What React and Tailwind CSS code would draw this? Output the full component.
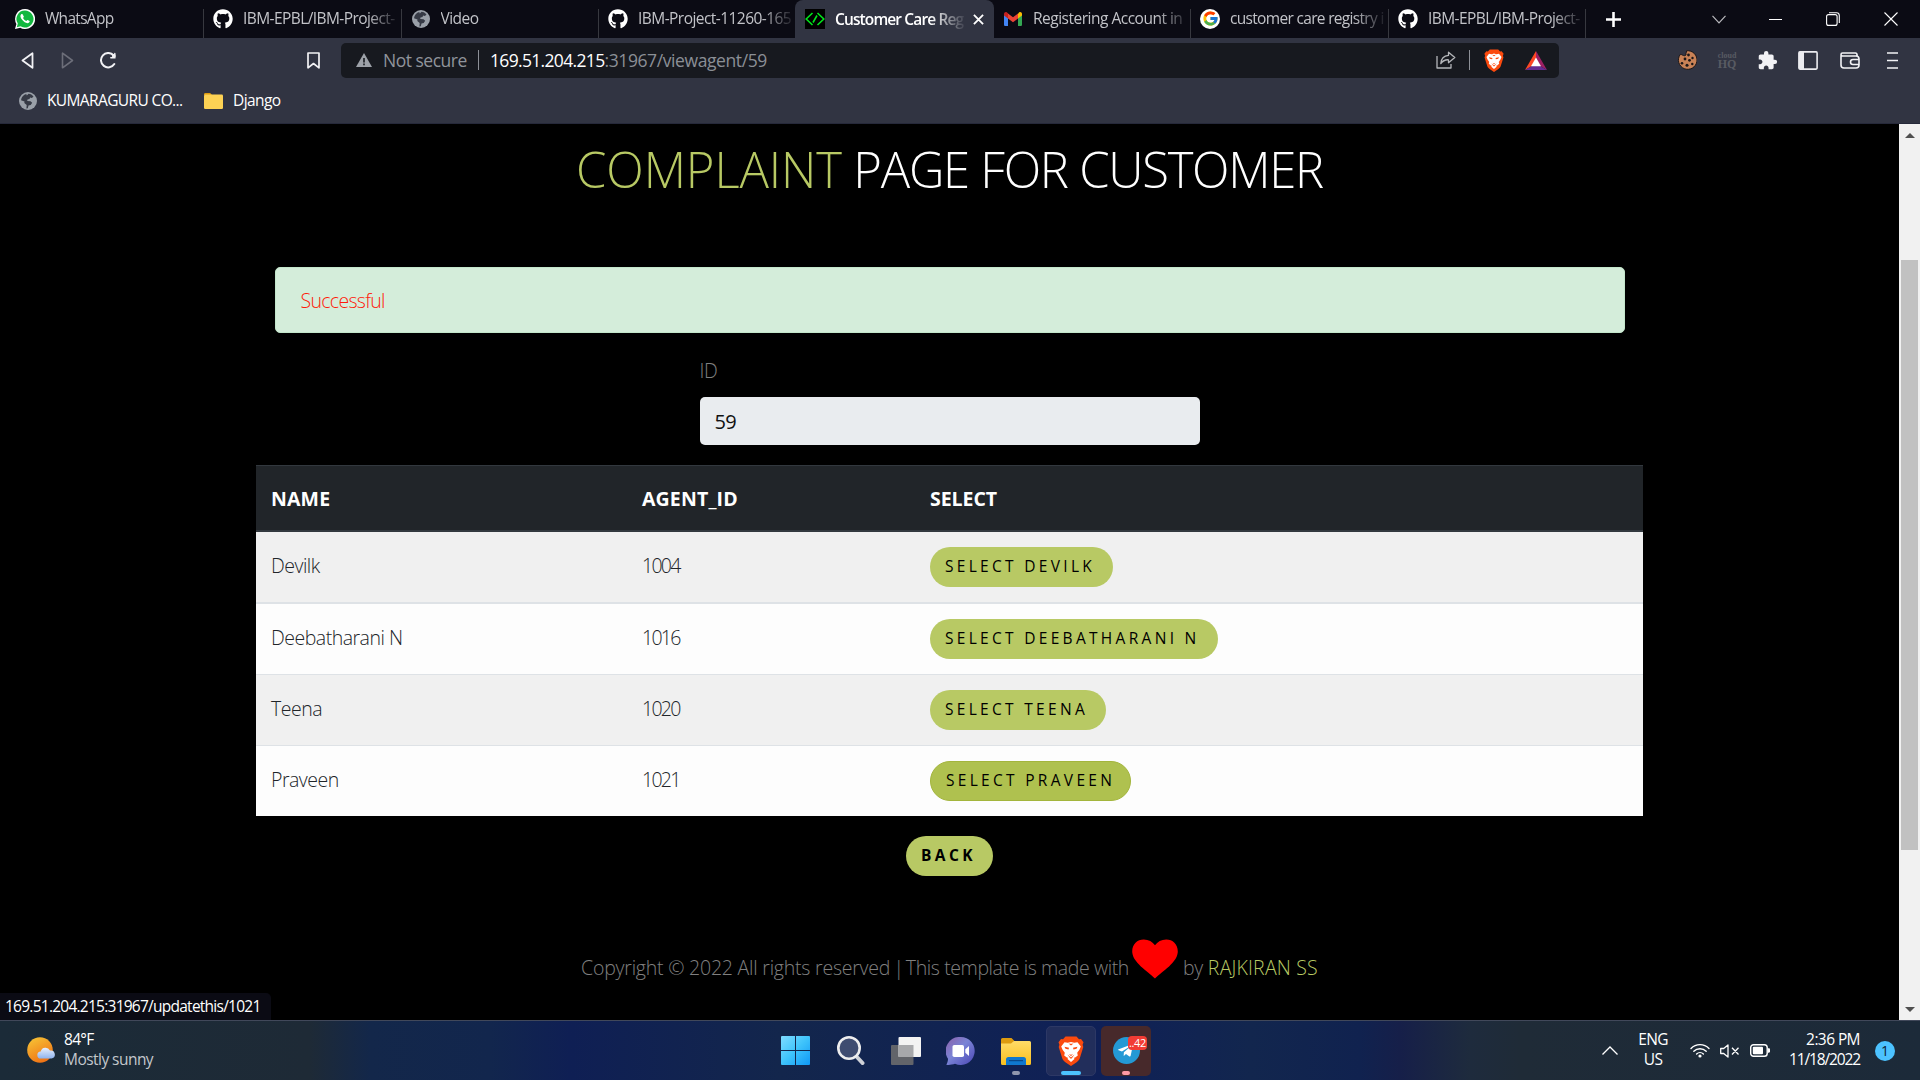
import { FaGithub, FaTelegramPlane } from "react-icons/fa";
import { FcGoogle } from "react-icons/fc";
import { MdExtension } from "react-icons/md";

function WhatsAppIcon() {
  return (
    <svg viewBox="0 0 20 20" className="size-5">
      <path d="M10 0a10 10 0 0 0-8.6 15L0 20l5.200-1.300A10 10 0 1 0 10 0z" fill="#fff" />
      <path d="M10 1.500a8.500 8.500 0 0 0-7.200 13.100l-1 3.600 3.700-1A8.500 8.500 0 1 0 10 1.500z" fill="#12b83f" />
      <path
        d="M7.600 5.300c-.3-.5-.8-.5-1.200-.2-1.700 1.300-1 3.700.7 5.700 2 2.400 4.800 4.200 6.700 3 .8-.5 1-1.200.8-1.700l-2-1.100c-.5-.2-.8.8-1.300 1-1.200-.3-3-2-3.200-3 .2-.5.900-.8.700-1.400z"
        fill="#fff"
      />
    </svg>
  );
}

function GlobeIcon() {
  return (
    <svg viewBox="0 0 18 18" className="size-[18px]">
      <circle cx="9" cy="9" r="9" fill="#9aa0a8" />
      <path
        d="M9.500 1.800c2 .1 3.900 1.200 5 2.900l-1.800 1.200-1.600-.3-.6 1.300-2 .6-.3 1.600 3.300.2 1.700 1.500-1.500 2.200-2.200.6-.7 2.600-1.400.2.300-3.300-2.400-2.100.2-1.500L2 8.200C2.300 5 4.500 2.500 7.300 1.900l.5 1.700z"
        fill="#363a45"
      />
    </svg>
  );
}

function CodeIcon() {
  return (
    <svg viewBox="0 0 20 20" className="size-5 bg-black" fill="none" stroke="#00e51b" strokeWidth="1.600">
      <path d="M7.500 4L1.200 10l6.300 6M12.500 4l6.300 6-6.300 6M12 6.500l-4 7" />
    </svg>
  );
}

function GmailIcon() {
  return (
    <svg viewBox="0 0 18 14" className="h-[14px] w-[18px]">
      <path d="M0 2v10.700C0 13.400.6 14 1.300 14H4V5.500z" fill="#4285f4" />
      <path d="M18 2v10.700c0 .7-.6 1.300-1.300 1.300H14V5.500z" fill="#34a853" />
      <path d="M14 1.800V6.500l4-3V2c0-1.700-1.800-2.500-3-1.500z" fill="#fbbc04" />
      <path d="M4 6.500V1.500l5 3.800 5-3.800v5l-5 3.800z" fill="#ea4335" />
      <path d="M0 2v1.500l4 3V1.300L3 .5C1.800-.5 0 .3 0 2z" fill="#c5221f" />
    </svg>
  );
}

function GoogleIcon() {
  return (
    <span className="flex size-5 items-center justify-center rounded-full bg-white">
      <FcGoogle className="size-[17px]" />
    </span>
  );
}

const GithubIcon = () => <FaGithub className="size-5 text-white" />;

const tabs = [
  { title: "WhatsApp", Icon: WhatsAppIcon, tab: "w-[204px] pl-[15px] border-r", text: "tracking-[-0.7px]" },
  { title: "IBM-EPBL/IBM-Project-", Icon: GithubIcon, tab: "w-[197.5px] pl-[9px] border-r", text: "tracking-[-0.58px]" },
  { title: "Video", Icon: GlobeIcon, tab: "w-[197.5px] pl-[9px] border-r", text: "tracking-[-0.55px]" },
  { title: "IBM-Project-11260-165", Icon: GithubIcon, tab: "w-[196px] pl-[9px]", text: "tracking-[-0.55px]" },
  { title: "Customer Care Reg", Icon: CodeIcon, active: true, tab: "w-[199px] pl-[10px]", text: "tracking-[-0.88px]" },
  { title: "Registering Account in", Icon: GmailIcon, tab: "w-[197px] pl-[9px] border-r", text: "tracking-[-0.5px]" },
  { title: "customer care registry i", Icon: GoogleIcon, tab: "w-[198px] pl-[9px] border-r", text: "tracking-[-0.68px]" },
  { title: "IBM-EPBL/IBM-Project-", Icon: GithubIcon, tab: "w-[196.5px] pl-[9px] border-r", text: "tracking-[-0.58px]" },
];

function TabStrip() {
  return (
    <div className="flex h-[38px] items-end bg-[#0b0b14]">
      {tabs.map(({ title, Icon, tab, text, active }, i) => (
        <div
          key={i}
          className={
            "flex shrink-0 items-center " +
            tab +
            (active ? " h-[38px] rounded-t-lg bg-[#313442]" : " h-[29px] border-[#37383f] pb-[10px]")
          }
        >
          <span className="flex w-5 shrink-0 justify-center">
            <Icon />
          </span>
          <span
            className={
              "ml-[10px] shrink-0 overflow-hidden pb-px text-[15.5px] leading-5 whitespace-nowrap " +
              text +
              (active
                ? " w-[132px] font-semibold text-white [mask-image:linear-gradient(to_right,black_95px,transparent_132px)]"
                : " w-[156px] text-[#c2c3c8] [mask-image:linear-gradient(to_right,black_124px,transparent_158px)]")
            }
          >
            {title}
          </span>
          {active && (
            <svg viewBox="0 0 12 12" className="ml-[6px] size-[11px] shrink-0" stroke="#fff" strokeWidth="2" fill="none">
              <path d="M1 1l10 10M11 1L1 11" />
            </svg>
          )}
        </div>
      ))}
      <div className="flex h-[38px] flex-1 items-center pl-5">
        <svg viewBox="0 0 14 14" className="size-[15px]" stroke="#fff" strokeWidth="2.400">
          <path d="M7 0v14M0 7h14" />
        </svg>
        <svg viewBox="0 0 14 9" className="ml-[91px] h-[9px] w-[14px]" stroke="#b9b9be" strokeWidth="1.200" fill="none">
          <path d="M.5.800L7 7.800 13.500.800" />
        </svg>
        <span className="ml-[43px] h-px w-[13px] bg-white" />
        <svg viewBox="0 0 14 14" className="ml-[44px] size-[14px]" stroke="#fff" strokeWidth="1.100" fill="none">
          <rect x=".6" y="2.600" width="10.500" height="10.800" rx="2" />
          <path d="M3 .7h7.500a2.800 2.800 0 0 1 2.800 2.800V11" />
        </svg>
        <svg viewBox="0 0 14 14" className="ml-[44px] size-[14px]" stroke="#fff" strokeWidth="1.100">
          <path d="M.5.500l13 13M13.500.500l-13 13" />
        </svg>
      </div>
    </div>
  );
}

function BraveLion({ className }) {
  return (
    <svg viewBox="0 0 26 30" className={className}>
      <path
        d="M7.500.500h11l2.500 2.800 2-.3 2.500 3.300-.9 2.400.7 2.400-3.500 11.200c-.6 1.900-1.800 3-3.500 4.200L13 30l-5.300-3.500c-1.700-1.200-2.900-2.300-3.500-4.200L.7 11.100l.7-2.400L.5 6.300 3 3l2 .3z"
        fill="#fb4a0e"
      />
      <path
        d="M6.500 6.200l3.300.6L13 6l3.200.8 3.300-.6 3.300 4.300-1.400 3.300-2.200 3 .6 2.600-3 2.300-1-.3.700 1.600L13 26l-3.500-3 .7-1.600-1 .3-3-2.300.6-2.600-2.200-3-1.400-3.300z"
        fill="#fff"
      />
      <path
        d="M6.500 10.800l4.500 1-.5 1.600-3-.6zM19.500 10.800l-4.500 1 .5 1.600 3-.6zM10.800 14.500l.5 3.300L13 19l1.700-1.200.5-3.300-.6 3.800L13 20.200l-1.600-1.900zM9.500 18.500l3.500 3 3.500-3-2.800 3.900h-1.400zM10.500 7.500L13 9.500l2.500-2-1.800.300H12z"
        fill="#fb4a0e"
      />
    </svg>
  );
}

function Toolbar() {
  return (
    <div className="flex h-[44px] items-center">
      <svg viewBox="0 0 13 17" className="ml-[21px] h-[17px] w-[13px]" stroke="#f2f2f5" strokeWidth="1.800" fill="none" strokeLinejoin="round">
        <path d="M11.500 1.200v14.600L1.500 8.500z" />
      </svg>
      <svg viewBox="0 0 13 17" className="ml-[27px] h-[17px] w-[13px]" stroke="#6c6e79" strokeWidth="1.600" fill="none" strokeLinejoin="round">
        <path d="M1.500 1.200v14.600l10-7.300z" />
      </svg>
      <svg viewBox="0 0 18 17" className="ml-[25px] h-[17px] w-[18px]" stroke="#f2f2f5" strokeWidth="2" fill="none" strokeLinecap="round">
        <path d="M14.500 3.300A7.200 7.200 0 1 0 15.300 12" />
        <circle cx="14.800" cy="4" r="1.900" fill="#f2f2f5" stroke="none" />
        <path d="M15.800 1.500v4.200h-4" strokeWidth="1.400" />
      </svg>
      <svg viewBox="0 0 13 17" className="ml-[190px] h-[17px] w-[13px]" stroke="#f2f2f5" strokeWidth="1.700" fill="none" strokeLinejoin="round">
        <path d="M1 1h11v14.800l-5.500-4.300L1 15.800z" />
      </svg>
      <div className="ml-[21px] flex h-[35px] w-[1218px] items-center rounded-[5px] bg-[#17191f]">
        <svg viewBox="0 0 16 14" className="ml-[15px] h-[14px] w-4">
          <path d="M8 0l8 14H0z" fill="#9da1a8" />
          <path d="M7.200 5h1.600v4.500H7.200zM7.200 10.600h1.600v1.600H7.200z" fill="#17191f" />
        </svg>
        <span className="ml-[11px] w-[95px] text-[17.5px] leading-6 tracking-[-0.5px] whitespace-nowrap text-[#90949b]">Not secure</span>
        <span className="h-5 w-px bg-[#8d9097]" />
        <span className="ml-[11px] text-[17.5px] leading-6 tracking-[-0.67px] whitespace-nowrap text-white">169.51.204.215</span>
        <span className="flex-1 text-[17.5px] leading-6 tracking-[-0.4px] whitespace-nowrap text-[#8b8f96]">:31967/viewagent/59</span>
        <svg viewBox="0 0 20 18" className="h-[18px] w-5" stroke="#b4b6ba" strokeWidth="1.300" fill="none" strokeLinejoin="round">
          <path d="M1 5v12h14v-4" />
          <path d="M12.500 1.200l6.300 5.300-6.300 5.200V8.800c-3.500-.3-5.700 1-7.700 3.800.3-4.500 3-7.800 7.700-8.200z" />
        </svg>
        <span className="ml-[13px] h-5 w-px bg-[#8d9097]" />
        <BraveLion className="ml-[14px] h-[23px] w-5" />
        <svg viewBox="0 0 22 19" className="mr-[12px] ml-[21px] h-[19px] w-[22px]">
          <path d="M11 0L0 19l6.800-4L11 7.500z" fill="#ff4724" />
          <path d="M11 0l11 19-6.800-4L11 7.500z" fill="#9e1f63" />
          <path d="M0 19h22l-6.800-4H6.800z" fill="#662d91" />
          <path d="M11 6.500l5 8.700H6z" fill="#fff" />
        </svg>
      </div>
      <svg viewBox="0 0 20 20" className="ml-[118px] size-5">
        <path d="M9.500.800c.2 1.800-.8 2.400-.5 3.300.5 1.200-1.200 2-2.400 1.500C5 5 4.500 4.300 3.300 4.400A9.300 9.300 0 1 0 9.500.800z" fill="#c98256" stroke="#1c1718" />
        <g fill="#1c1718">
          <circle cx="11.500" cy="5" r="1.400" />
          <circle cx="15.500" cy="8" r="1.200" />
          <circle cx="8" cy="9" r="1.400" />
          <circle cx="12.500" cy="10.300" r="1.400" />
          <circle cx="5" cy="13.300" r="1.300" />
          <circle cx="10" cy="15.200" r="1.500" />
          <circle cx="15.300" cy="14" r="1.200" />
        </g>
      </svg>
      <span className="ml-[19px] flex w-[22px] flex-col items-center font-['Liberation_Serif'] font-bold text-[#585b62]">
        <span className="text-[8px] leading-[7px]">cloud</span>
        <span className="text-[12px] leading-[10px]">HQ</span>
      </span>
      <MdExtension className="ml-[19px] size-[21px] text-[#f2f2f5]" />
      <svg viewBox="0 0 20 19" className="ml-[20px] h-[19px] w-5">
        <rect x=".9" y=".9" width="18.200" height="17.200" rx="1" fill="none" stroke="#ececf0" strokeWidth="1.600" />
        <path d="M1 1h5v17H1z" fill="#ececf0" />
      </svg>
      <svg viewBox="0 0 20 17" className="ml-[22px] h-[17px] w-5" fill="none" stroke="#f2f2f5" strokeWidth="1.600">
        <path d="M1 3.200v9.800a3 3 0 0 0 3 3h12a3 3 0 0 0 3-3V7a3 3 0 0 0-3-3H2.500A1.500 1.500 0 0 1 2.500 1H15.500c1 0 1.500.6 1.700 2.500" />
        <path d="M19 7.500h-6a2.400 2.400 0 0 0 0 5h6" />
      </svg>
      <svg viewBox="0 0 11 17" className="ml-[27px] h-[17px] w-[11px]" stroke="#f2f2f5" strokeWidth="1.600">
        <path d="M0 1h11M0 8.500h11M0 16h11" />
      </svg>
    </div>
  );
}

function Bookmarks() {
  return (
    <div className="flex h-[42px] items-start border-b border-[#26293a] pt-[8px] text-[15.5px] leading-5 whitespace-nowrap text-white">
      <span className="mt-[2px] ml-[19px]">
        <GlobeIcon />
      </span>
      <span className="ml-[10px] w-[157px] tracking-[-0.62px]">KUMARAGURU CO...</span>
      <svg viewBox="0 0 19 16" className="mt-[3px] h-4 w-[19px]">
        <path d="M0 1.500C0 .7.500 0 1.300 0h4.900l1.800 2H0z" fill="#dd9b10" />
        <rect y="1.600" width="19" height="14.400" rx="1.200" fill="#fdd254" />
      </svg>
      <span className="ml-[10px] tracking-[-0.58px]">Django</span>
    </div>
  );
}

const agents = [
  { name: "Devilk", id: "1004", row: "h-[72px] border-b-2 bg-[#f0f0f0]", button: "w-[183px] bg-[#b8c964]" },
  { name: "Deebatharani N", id: "1016", row: "h-[71px] border-b bg-[#fdfdfd]", button: "w-[288px] bg-[#b8c964]" },
  { name: "Teena", id: "1020", row: "h-[71px] border-b bg-[#f0f0f0]", button: "w-[176px] bg-[#b8c964]" },
  { name: "Praveen", id: "1021", row: "h-[70px] bg-[#fdfdfd]", button: "w-[201px] border border-[#a3b53c] bg-[#afc14f]" },
];

function AgentTable() {
  return (
    <div className="mt-5 w-[1387px]">
      <div className="grid h-[67px] grid-cols-[371px_288px_1fr] items-center border-t border-b-2 border-[#32383e] bg-[#212529] pt-[2px] pl-[15px] text-[19.5px] font-bold text-white">
        <span className="tracking-[0.15px]">NAME</span>
        <span className="tracking-[0.15px]">AGENT_ID</span>
        <span className="tracking-[-0.05px]">SELECT</span>
      </div>
      {agents.map((a) => (
        <div
          key={a.id}
          className={"grid grid-cols-[371px_288px_1fr] items-start border-[#dee2e6] pl-[15px] text-[19.5px] font-light text-[#212529] " + a.row}
        >
          <span className="pt-[19px] leading-[30px] tracking-[-0.5px]">{a.name}</span>
          <span className="pt-[19px] leading-[30px] tracking-[-1.7px]">{a.id}</span>
          <span className="pt-[15px]">
            <button
              className={
                "flex h-10 items-center rounded-[20px] pl-[15px] text-[15.5px] font-normal tracking-[3.3px] whitespace-nowrap text-black uppercase " +
                a.button
              }
            >
              Select {a.name}
            </button>
          </span>
        </div>
      ))}
    </div>
  );
}

function Page() {
  return (
    <main className="relative flex h-full flex-1 flex-col items-center bg-black">
      <h1 className="mt-[15px] h-[60px] text-[49px] leading-[60px] font-light whitespace-nowrap text-white">
        <span className="tracking-[-0.1px] text-[#b8c964]">COMPLAINT</span>
        <span className="tracking-[-1.270px]"> PAGE FOR CUSTOMER</span>
      </h1>
      <div className="mt-[68px] flex h-[66px] w-[1350px] items-center rounded-[5px] border border-[#c3e6cb] bg-[#d4edda] pt-[2px] pl-[25px] text-[19.5px] font-light tracking-[-0.7px] text-[#ff1a0a]">
        Successful
      </div>
      <div className="mt-[23px] w-[500px]">
        <label className="block h-[30px] text-[19.5px] leading-[30px] font-light tracking-[-0.5px] text-[#808080]">ID</label>
        <div className="mt-[11px] flex h-12 items-center rounded-[5px] bg-[#e9ecef] pt-[2px] pl-[15px] text-[20px] tracking-[-0.8px] text-[#111]">59</div>
      </div>
      <AgentTable />
      <button className="mt-5 flex h-10 w-[87px] items-center rounded-[20px] bg-[#b8c964] pl-[15px] text-[15.5px] font-bold tracking-[3.4px] text-black">
        BACK
      </button>
      <footer className="mt-[63px] flex h-[44px] items-end text-[19.5px] leading-[30px] font-light whitespace-pre text-[#808080]">
        <span className="w-[547px]">
          <span className="tracking-[-0.22px]">Copyright © 2022 All rights reserved</span>
          <span className="tracking-[-1.700px]"> | </span>
          <span className="tracking-[-0.4px]">This template is made with</span>
        </span>
        <svg viewBox="0 0 47 40" className="mb-[4px] ml-[4px] h-10 w-[46px]">
          <path d="M23.500 40C20 35 1.500 25 .3 13.500-.5 5.500 5 0 12 0c5 0 9 2.200 11.500 6C26 2.200 30 0 35 0c7 0 12.500 5.500 11.700 13.500C45.500 25 27 35 23.500 40z" fill="#f00" />
        </svg>
        <span className="ml-[5px] tracking-[-0.4px]">by</span>
        <span className="ml-[5px] tracking-[0.18px] text-[#b8c964]">RAJKIRAN SS</span>
      </footer>
      <div className="absolute bottom-0 left-0 h-[27px] w-[271px] rounded-tr-[5px] bg-[#0b0b14] pl-[5px] text-[15.5px] leading-[27px] tracking-[-0.75px] whitespace-nowrap text-white">
        169.51.204.215:31967/updatethis/1021
      </div>
    </main>
  );
}

function Scrollbar() {
  return (
    <div className="flex h-full w-[21px] flex-col items-center justify-between bg-[#f1f1f1]">
      <svg viewBox="0 0 10 5" className="mt-[9px] h-[5px] w-[10px]">
        <path d="M5 0l5 5H0z" fill="#505050" />
      </svg>
      <div className="mt-[122px] mb-auto h-[590px] w-[17px] bg-[#c1c1c1]" />
      <svg viewBox="0 0 10 5" className="mb-[8px] h-[5px] w-[10px]">
        <path d="M0 0h10L5 5z" fill="#505050" />
      </svg>
    </div>
  );
}

function Weather() {
  return (
    <div className="flex w-[400px] items-center">
      <svg viewBox="0 0 28 26" className="mb-[2px] ml-[27px] h-[26px] w-[28px]">
        <defs>
          <linearGradient id="sun" x1="0.2" y1="0" x2="0.700" y2="1">
            <stop offset="0" stopColor="#f6c235" />
            <stop offset="1" stopColor="#ef6e13" />
          </linearGradient>
          <linearGradient id="cloud" x1="0" y1="0" x2="0" y2="1">
            <stop offset="0" stopColor="#e8effc" />
            <stop offset="1" stopColor="#8fb3ee" />
          </linearGradient>
        </defs>
        <circle cx="13" cy="13" r="12.800" fill="url(#sun)" />
        <path d="M14 21.500a3.500 3.500 0 0 1-.3-7 5 5 0 0 1 9.300-1 4 4 0 0 1 1.500 8z" fill="url(#cloud)" />
      </svg>
      <div className="mb-[4px] ml-[9px] text-[15.5px] leading-5 whitespace-nowrap">
        <div className="tracking-[-0.7px] text-white">84°F</div>
        <div className="tracking-[-0.54px] text-[#c3c7cc]">Mostly sunny</div>
      </div>
    </div>
  );
}

function TaskbarApps() {
  return (
    <div className="flex items-center">
      <svg viewBox="0 0 29 29" className="size-[29px]">
        <defs>
          <linearGradient id="win" x1="0" y1="0" x2="1" y2="1">
            <stop offset="0" stopColor="#7fdcff" />
            <stop offset=".5" stopColor="#3ec3fb" />
            <stop offset="1" stopColor="#0f98f6" />
          </linearGradient>
        </defs>
        <path d="M0 1a1 1 0 0 1 1-1h13v14H0zM15 0h13a1 1 0 0 1 1 1v13H15zM0 15h14v14H1a1 1 0 0 1-1-1zM15 15h14v13a1 1 0 0 1-1 1H15z" fill="url(#win)" />
      </svg>
      <svg viewBox="0 0 28 29" className="ml-[27px] h-[29px] w-[28px]" fill="none">
        <path d="M19 20l6.500 7" stroke="#cfd2d8" strokeWidth="4" strokeLinecap="round" />
        <circle cx="12" cy="12" r="10.700" stroke="#ededee" strokeWidth="2.600" fill="#3f4c70" />
      </svg>
      <svg viewBox="0 0 30 28" className="ml-[26px] h-[28px] w-[30px]">
        <rect y="8" width="22.500" height="20" rx="1" fill="#62646a" />
        <rect x="7.500" width="22.500" height="20" rx="1" fill="#f3f3f3" />
        <path d="M7.500 8h15v12h-15z" fill="#a7a8ab" />
      </svg>
      <svg viewBox="0 0 29 28" className="ml-[25px] h-[28px] w-[29px]">
        <defs>
          <linearGradient id="chat" x1="0" y1="0" x2="1" y2="1">
            <stop offset="0" stopColor="#8c5fa8" />
            <stop offset=".45" stopColor="#7a84d6" />
            <stop offset="1" stopColor="#4a46b5" />
          </linearGradient>
        </defs>
        <path d="M14.500 0a14 14 0 1 1-5.500 26.800C6.500 27.800 2 28.300.3 27.700c1-1.500 1.800-3.700 1.700-6A14 14 0 0 1 14.500 0z" fill="url(#chat)" />
        <rect x="6.500" y="8" width="11.500" height="12" rx="1.800" fill="#fff" />
        <path d="M19.300 12.200L23 9v10l-3.700-3.200z" fill="#fff" />
      </svg>
      <div className="ml-[26px] flex h-[50px] w-[30px] flex-col items-center">
        <svg viewBox="0 0 30 27" className="mt-[12px] h-[27px] w-[30px]">
          <defs>
            <linearGradient id="folder" x1="0" y1="0" x2="0" y2="1">
              <stop offset="0" stopColor="#ffdc68" />
              <stop offset="1" stopColor="#fabf1e" />
            </linearGradient>
          </defs>
          <path d="M0 1.500A1.500 1.500 0 0 1 1.500 0h9l3 3-3 4H0z" fill="#dd9b10" />
          <path d="M0 5.500h10l3-2.500h15.500A1.500 1.500 0 0 1 30 4.500V25.500a1.500 1.500 0 0 1-1.500 1.500h-27A1.500 1.500 0 0 1 0 25.500z" fill="url(#folder)" />
          <path d="M5 27v-5.500A2.500 2.500 0 0 1 7.500 19h15a2.500 2.500 0 0 1 2.500 2.500V27z" fill="#0f78cf" />
          <path d="M8 22.700h14" stroke="#083f7c" />
        </svg>
        <span className="mt-[6px] h-1 w-2 rounded-full bg-[#8f96ad]" />
      </div>
      <div className="ml-[15px] flex h-[50px] w-[50px] flex-col items-center rounded-[5px] border border-[#2d3865] bg-[#222e5b]">
        <BraveLion className="mt-[9px] h-[30px] w-[26px]" />
        <span className="mt-[5px] h-1 w-5 rounded-full bg-[#4cc2ff]" />
      </div>
      <div className="relative ml-[5px] flex h-[50px] w-[50px] flex-col items-center rounded-[5px] bg-[#47292b]">
        <span className="mt-[11px] flex size-[27px] items-center justify-center rounded-full bg-[#2499d5]">
          <FaTelegramPlane className="mr-[2px] size-[17px] text-white" />
        </span>
        <span className="mt-[7px] h-1 w-2 rounded-full bg-[#ff99a4]" />
        <span className="absolute top-[10px] right-[4px] flex h-[14px] w-[19px] items-center justify-center rounded-[4px] bg-[#f23c34] text-[11px] leading-[14px] tracking-[-0.3px] text-white">
          ..42
        </span>
      </div>
    </div>
  );
}

function SystemTray() {
  return (
    <div className="flex items-center text-[15.5px] leading-5 whitespace-nowrap text-white">
      <svg viewBox="0 0 16 9" className="h-[9px] w-4" fill="none" stroke="#fff" strokeWidth="1.300">
        <path d="M.5 8.500L8 1l7.500 7.500" />
      </svg>
      <div className="mb-[3px] ml-[18px] w-[34px] text-center tracking-[-0.7px]">
        <div>ENG</div>
        <div>US</div>
      </div>
      <svg viewBox="0 0 20 15" className="ml-[20px] h-[15px] w-5" fill="none" stroke="#fff" strokeWidth="1.400" strokeLinecap="round">
        <path d="M1 5.500a12.500 12.500 0 0 1 18 0M3.800 8.300a8.700 8.700 0 0 1 12.400 0M6.600 11a4.900 4.900 0 0 1 6.800 0" />
        <circle cx="10" cy="13" r="1.600" fill="#fff" stroke="none" />
      </svg>
      <svg viewBox="0 0 20 14" className="ml-[10px] h-[14px] w-5" fill="none" stroke="#fff" strokeWidth="1.300" strokeLinejoin="round">
        <path d="M.7 4.500v5h3L8 13V1L3.700 4.500zM12 3.700l6.500 6.800M18.500 3.700L12 10.500" />
      </svg>
      <svg viewBox="0 0 20 13" className="ml-[10px] h-[13px] w-5">
        <rect x=".7" y=".7" width="16.500" height="11.600" rx="2.800" fill="none" stroke="#fff" strokeWidth="1.400" />
        <rect x="2.800" y="2.800" width="10.200" height="7.400" rx="1" fill="#fff" />
        <path d="M17.800 4.200h1c.7 0 1.200.5 1.200 1.200v2.200c0 .7-.5 1.200-1.200 1.200h-1z" fill="#fff" />
      </svg>
      <div className="mb-[4px] ml-[10px] w-[80px] text-right">
        <div className="tracking-[-0.58px]">2:36 PM</div>
        <div className="tracking-[-1.120px]">11/18/2022</div>
      </div>
      <span className="mr-[25px] ml-[15px] flex size-5 items-center justify-center rounded-full bg-[#4cc2ff] text-[14px] leading-5 text-[#0c2233]">1</span>
    </div>
  );
}

export default function App() {
  return (
    <div className="flex h-[1080px] w-[1920px] flex-col overflow-hidden bg-black font-['Open_Sans','Noto_Sans',sans-serif]">
      <header className="h-[124px] shrink-0 bg-[#313442]">
        <TabStrip />
        <Toolbar />
        <Bookmarks />
      </header>
      <div className="flex h-[896px] shrink-0">
        <Page />
        <Scrollbar />
      </div>
      <div className="flex h-[60px] shrink-0 items-center border-t border-[#41485a] bg-[linear-gradient(to_right,#1b2b38_0px,#1e2a36_310px,#13274a_370px,#12264d_490px,#0f1f54_570px,#13264c_780px,#0f2057_1100px,#12264e_1250px,#10224f_1360px,#161f49_1400px,#1e2b3d_1470px,#1f2b37_1520px,#1c2a39_1920px)]">
        <Weather />
        <div className="flex flex-1 justify-start pl-[381px]">
          <TaskbarApps />
        </div>
        <SystemTray />
      </div>
    </div>
  );
}
